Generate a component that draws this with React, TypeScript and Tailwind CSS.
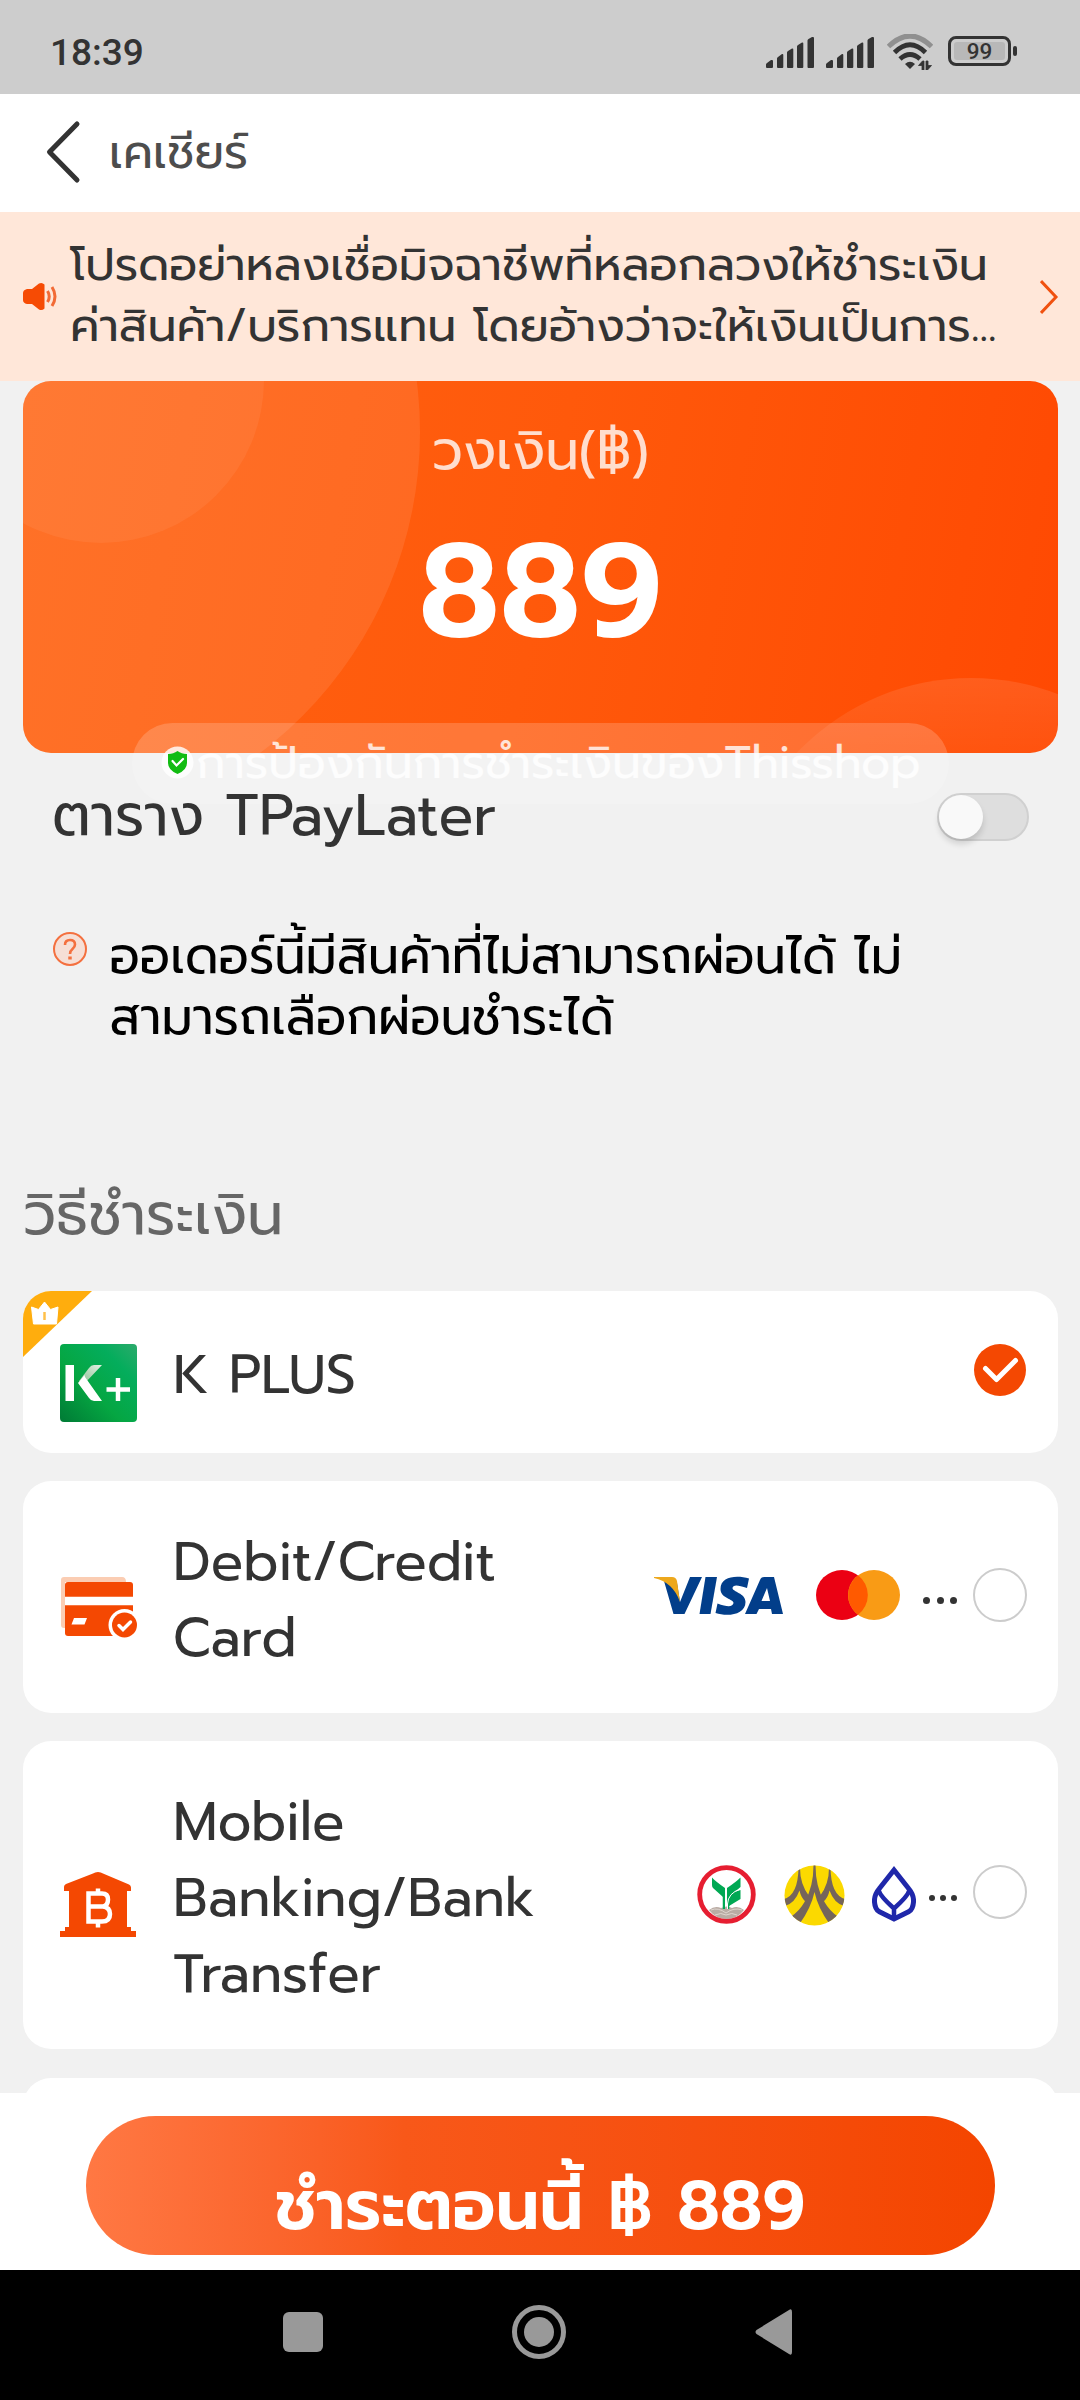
function Signal() {
  return (
    <svg width="48" height="31" viewBox="0 0 48 31" fill="#333">
      <path d="M0 27.500q0-1 1-1.500l4-3h1q1 0 1 1V30q0 1-1 1H1q-1 0-1-1zM11 21.500q0-1 1-1.500l4-3h.5q.8 0 .8 1V30q0 1-1 1H12q-1 0-1-1zM21 15.500q0-1 1-1.500l4-2.500h.5q.8 0 .8 1V30q0 1-1 1H22q-1 0-1-1zM31 9.500q0-1 1-1.500l4-2.500h.5q.8 0 .8 1V30q0 1-1 1H32q-1 0-1-1zM41.500 3.500q0-1 1-1.500l3.500-2h1q1 0 1 1V30q0 1-1 1h-4.500q-1 0-1-1z" />
    </svg>
  );
}

function StatusBar() {
  return (
    <header className="flex h-[94px] shrink-0 items-start bg-[#cdcdcd] pl-[50px] pr-[63px] text-[#333]">
      <div className="mt-[31px] font-[Roboto] text-[37px] font-medium leading-[44px]">18:39</div>
      <div className="ml-auto mt-[34px] flex items-start">
        <div className="mt-[2.500px] flex gap-3">
          <Signal />
          <Signal />
        </div>
        <svg className="ml-[13px]" width="46" height="36" viewBox="0 0 46 36" fill="none">
          <path d="M1.500 12.500Q23-8.500 44.500 12.500" stroke="#909090" strokeWidth="5" />
          <path d="M7.500 18.500Q23 3 38.500 18.500M13 25Q23 16 33 25" stroke="#333" strokeWidth="4.800" />
          <path d="M18 30q5-4.500 10 0l-5 5z" fill="#333" />
          <path d="M37 27v9h-2v-4.500h-3.500l4-4.500zM39 36v-9h2v4.500h3.500L40.500 36z" fill="#333" stroke="#333" strokeWidth=".8" />
        </svg>
        <div className="ml-[15px] mt-[2px] flex items-center gap-[2px]">
          <div className="flex h-[30px] w-[63px] rounded-[8px] border-3 border-[#333] p-[3px]">
            <div className="flex w-full items-center justify-center rounded-[3px] bg-[#b8b8b8] font-[Roboto] text-[22.500px] font-medium leading-none">
              99
            </div>
          </div>
          <div className="h-[10px] w-[4px] rounded-[2px] bg-[#333]" />
        </div>
      </div>
    </header>
  );
}

function Notice() {
  return (
    <section className="flex h-[169px] shrink-0 items-start bg-[#ffe7d9] pl-[23px] text-[#333]">
      <svg className="mt-[70px]" width="34" height="30" viewBox="0 0 34 30">
        <path d="M4 7h5l7-5.500q3-1.500 5.500 1v24q-2.500 2.500-5.500 1L9 22H4q-4-1-4-4v-7q0-3 4-4z" fill="#f64b04" />
        <path d="M24.500 9q3.500 5.500 0 11M29 5q6 9.500 0 19" fill="none" stroke="#f26a35" strokeWidth="3" />
      </svg>
      <div className="ml-[13px] mt-[22px] w-[926px] whitespace-nowrap text-[46px] leading-[61px]">
        <p>โปรดอย่าหลงเชื่อมิจฉาชีพที่หลอกลวงให้ชำระเงิน</p>
        <p className="text-[46.100px]">ค่าสินค้า/บริการแทน โดยอ้างว่าจะให้เงินเป็นการ...</p>
      </div>
      <svg className="ml-[44px] mt-[67px]" width="20" height="36" viewBox="0 0 20 36" fill="none" stroke="#f0510f" strokeWidth="3">
        <path d="M1 2l15 16L1 34" />
      </svg>
    </section>
  );
}

function BalanceCard() {
  return (
    <section className="relative ml-[23px] mr-[22px] h-[372px] shrink-0 whitespace-nowrap">
      <div className="relative flex h-full flex-col items-center overflow-hidden rounded-[28px] bg-linear-100 from-[#ff6312] via-[#ff590b] to-[#ff4902]">
        <div className="absolute -left-[407px] -top-[351px] size-[804px] rounded-full bg-white/9" />
        <div className="absolute -left-[85px] -top-[164px] size-[326px] rounded-full bg-white/6" />
        <div className="absolute left-[708px] top-[297px] size-[480px] rounded-full bg-linear-to-b from-white/10 to-white/0 to-30%" />
        <div className="relative mt-[36px] text-[53.600px] leading-[70px] text-white/80">วงเงิน(฿)</div>
        <div className="relative mt-[25px] text-[131px] font-semibold leading-[160px] text-white">889</div>
      </div>
      <div className="absolute left-[109px] top-[342px] flex h-[81px] w-[817px] items-start rounded-full bg-white/18 pl-[29px]">
        <svg className="mt-[23px]" width="33" height="33" viewBox="0 0 33 33">
          <circle cx="16.500" cy="16.500" r="16" fill="#fff" fillOpacity=".82" />
          <path d="M16.500 5q4 3 9.500 3v9q0 7-9.500 11Q7 24 7 17V8q5.500 0 9.500-3z" fill="#12bc12" />
          <path d="M11.500 15l4 4.500 6.500-6.500" fill="none" stroke="#fff" strokeWidth="2.200" strokeLinecap="round" />
        </svg>
        <div className="ml-[2px] mt-[10px] text-[46px] leading-[60px] text-white/80">การป้องกันการชำระเงินของThisshop</div>
      </div>
    </section>
  );
}

function Installments() {
  return (
    <section className="relative h-[424px] shrink-0 whitespace-nowrap pl-[52px] pr-[51px]">
      <div className="flex items-start justify-between pt-[25px]">
        <div className="text-[57.500px] leading-[76px] text-[#333]">ตาราง TPayLater</div>
        <div className="mt-[15px] h-[48px] w-[92px] rounded-full border-2 border-[#d0d0d0] bg-[#dedede]">
          <div className="size-[44px] rounded-full bg-[#f9f9f9] shadow-[0_5px_6px_rgba(0,0,0,0.14)]" />
        </div>
      </div>
      <div className="mt-[72px] flex items-start">
        <svg className="mt-[5px]" width="36" height="36" viewBox="0 0 36 36" fill="none" stroke="#f4703f">
          <circle cx="18" cy="18" r="16" fill="#f6dfd6" strokeWidth="2" />
          <path d="M13 14q0-5 5-5t5 4.500q0 2.500-2.500 4.500T18 23" strokeWidth="2.600" />
          <path d="M18 25.500v3" strokeWidth="3.500" />
        </svg>
        <div className="ml-[21.500px] text-[49.800px] leading-[61px] text-black">
          <p>ออเดอร์นี้มีสินค้าที่ไม่สามารถผ่อนได้ ไม่</p>
          <p>สามารถเลือกผ่อนชำระได้</p>
        </div>
      </div>
    </section>
  );
}

function Radio({ className }: { className: string }) {
  return <div className={`size-[54px] shrink-0 rounded-full border-2 border-[#ccc] ${className}`} />;
}

function Ellipsis({ className, dot }: { className: string; dot: string }) {
  return (
    <div className={`flex ${className}`}>
      {[0, 1, 2].map((i) => (
        <div key={i} className={`rounded-full bg-[#333] ${dot}`} />
      ))}
    </div>
  );
}

function KPlusLogo() {
  return (
    <svg className="ml-[37px] mt-[53px]" width="77" height="78" viewBox="0 0 77 78">
      <defs>
        <linearGradient id="kplus" x1="0" y1="1" x2="1" y2="0">
          <stop offset="0" stopColor="#007a35" />
          <stop offset=".4" stopColor="#05a642" />
          <stop offset=".75" stopColor="#04ad5c" />
          <stop offset="1" stopColor="#2caa6c" />
        </linearGradient>
        <linearGradient id="karm" x1="1" y1="0" x2="0" y2="1">
          <stop offset="0" stopColor="#e4f1e4" />
          <stop offset="1" stopColor="#86bd8e" />
        </linearGradient>
      </defs>
      <rect width="77" height="78" rx="4" fill="url(#kplus)" />
      <path d="M5.500 21H14v36H5.500z" fill="#fff" />
      <path d="M42 21h-8q-3 0-5 3L19 37l6 2z" fill="url(#karm)" />
      <path d="M24.500 31l-6.500 8 11 15q2 3 5 3h8L25 33z" fill="#fff" />
      <path d="M46.500 45.500H70M58 34v23" stroke="#fff" strokeWidth="4.500" />
    </svg>
  );
}

function KPlusCard() {
  return (
    <div className="relative flex h-[162px] shrink-0 items-start overflow-hidden rounded-[28px] bg-white">
      <svg className="absolute left-0 top-0" width="69" height="66" viewBox="0 0 69 66">
        <path d="M0 0h69L0 66z" fill="#ffad0d" />
        <path d="M8.500 16l7 2.500L21.500 11l6 7.500 7.500-2.500-1.500 17H10.500z" fill="#fff" stroke="#fff" strokeLinejoin="round" />
        <path d="M21.500 21v8" stroke="#ffc04a" strokeWidth="2.500" />
      </svg>
      <KPlusLogo />
      <div className="ml-[36px] mt-[47px] text-[53.600px] leading-[76px]">K PLUS</div>
      <svg className="ml-auto mr-[31px] mt-[52px]" width="54" height="54" viewBox="0 0 54 54">
        <circle cx="27" cy="27" r="26" fill="#f44802" />
        <path d="M12.500 25.500L23.500 36.500l19-19" fill="none" stroke="#fff" strokeWidth="5" strokeLinecap="round" strokeLinejoin="round" />
      </svg>
    </div>
  );
}

function CreditCardRow() {
  return (
    <div className="flex h-[232px] shrink-0 items-start rounded-[28px] bg-white">
      <svg className="ml-[37px] mt-[96px]" width="78" height="61" viewBox="0 0 78 61">
        <path d="M4 0h58q4 0 4 5H5v46H4q-3 0-3-3V3q0-3 3-3z" fill="#fbcdb3" />
        <rect x="5" y="5" width="68" height="54" rx="3" fill="#f44802" />
        <path d="M5 19.700h68v8.600H5z" fill="#fff" />
        <path d="M14 41h13l-2.500 6.500H11.500z" fill="#fff" />
        <circle cx="64.500" cy="48" r="16" fill="#fff" />
        <circle cx="64.500" cy="48" r="12.500" fill="#f44802" />
        <path d="M59 48.500l4 4 7.500-7.500" fill="none" stroke="#fff" strokeWidth="3.500" strokeLinecap="round" />
      </svg>
      <div className="ml-[35px] mt-[44px] text-[53.600px] leading-[76px]">
        <p>Debit/Credit</p>
        <p>Card</p>
      </div>
      <div className="ml-auto mr-[31px] flex items-start">
        <svg className="mt-[94px]" width="132" height="42" viewBox="0 0 132 42">
          <g fill="#023e8a">
            <path d="M12 6l9.500 33h11L50 2H38L28 27 25 8z" />
            <path d="M53.500 2H65l-6.500 37H47.500z" />
            <path d="M97 3.500l-2 9.500q-14-5-14.500 0c0 4 13 5 13 14 0 13-18 15-30 11l2-9.500q15 5.500 16-.5c.5-4-13-4.500-13-14C68.500 1 85 0 97 3.500z" />
            <path fillRule="evenodd" d="M105.500 2H122l9 37h-11l-1-5h-12l-2.500 5H93L108 5q1-3 4-3h-2zM115 13l-5.500 13h8.500z" />
          </g>
          <path d="M2 2h18q4 0 5 4l3 21Q21 7 2 3z" fill="#eda81d" />
        </svg>
        <svg className="ml-[32px] mt-[89px]" width="84" height="50" viewBox="0 0 84 50">
          <ellipse cx="26" cy="25" rx="26" ry="25" fill="#eb0013" />
          <ellipse cx="58" cy="25" rx="26" ry="25" fill="#f99b15" />
          <path d="M42 5.300a25.600 25 0 0 1 0 39.400 25.600 25 0 0 1 0-39.400z" fill="#ff5a00" />
        </svg>
        <Ellipsis className="ml-[23px] mt-[116px] gap-[6.500px]" dot="size-[7px]" />
        <Radio className="ml-[16px] mt-[87px]" />
      </div>
    </div>
  );
}

function KasikornLogo() {
  return (
    <svg className="mt-[124px]" width="59" height="59" viewBox="0 0 59 59">
      <circle cx="29.500" cy="29.500" r="26.800" fill="#fff" />
      <path d="M12 45q6-5 12-2 6-3 11 0 6-3 12 2-7 9-17.500 9T12 45z" fill="#b9aca4" />
      <path d="M14 45q7-3 15 3 8-6 16-3M18 50q6-3 11 0 6-3 11 0" fill="none" stroke="#ded5cf" strokeWidth="1" />
      <path d="M15 12.500Q18 16 28 23v21h-2V32L16 23q-1-1-1-3zM43.500 12.500V22L32 32q3-5 11.500-7v9L32 41v3h-2V23q9-6 13.500-10.500z" fill="#00a853" />
      <path d="M26.500 30v14M31.500 38v6" fill="none" stroke="#00a853" strokeWidth="1.500" />
      <path d="M43.500 24Q31 28 30.500 39v5" fill="none" stroke="#fff" strokeWidth="1" />
      <circle cx="29.500" cy="29.500" r="26.800" fill="none" stroke="#e61e31" strokeWidth="4.800" />
    </svg>
  );
}

function KrungsriLogo() {
  return (
    <svg className="ml-[28px] mt-[124px]" width="61" height="61" viewBox="0 0 61 61">
      <defs>
        <clipPath id="disc">
          <circle cx="30.500" cy="30.500" r="30" />
        </clipPath>
      </defs>
      <g clipPath="url(#disc)">
        <path d="M0 0h61v61H0z" fill="#fbd900" />
        <g fill="#75655b">
          <path d="M29.500 0h2q0 22 9 37 5 9 14 15l-9 7Q34 43 30.500 27 27 43 15.500 59l-9-7q9-6 14-15 9-15 9-37z" />
          <path d="M14.500 3h1.500q0 16 9 28l-3 6q-5-4-6.500-11.500Q11 38 1 41l-1-7q14-4 14.500-31zM46.500 3H45q0 16-9 28l3 6q5-4 6.500-11.500Q50 38 60 41l1-7Q47 30 46.500 3z" />
        </g>
      </g>
    </svg>
  );
}

function BangkokLogo() {
  return (
    <svg className="ml-[27px] mt-[124px]" width="44" height="57" viewBox="0 0 44 57" fill="none" stroke="#1f27aa" strokeWidth="5">
      <path d="M22 5L7 24Q2 30 2.500 37T7 46.500L22 54l15-7.500q4-2.500 4.500-9.500T37 24z" />
      <path d="M6.500 25Q8 31 22 43.500 36 31 37.500 25M22 54V42" strokeWidth="4.500" />
    </svg>
  );
}

function BankTransferRow() {
  return (
    <div className="flex h-[308px] shrink-0 items-start rounded-[28px] bg-white">
      <svg className="ml-[37px] mt-[131px]" width="76" height="65" viewBox="0 0 76 65">
        <path d="M38 0q3 0 5 1.500l26 11q2 1 2 3V19h-4v36h4v4h5v6H0v-6h5v-4h4V19H4v-4q0-2 2-3l27-10.500Q35 0 38 0z" fill="#f44802" />
        <path d="M28.500 21.500H42q6 0 6 6t-5 7q7 1 7 7.500 0 7.500-8 7.500H28.500zM29 34.500h14M38 16.500v5M38 49.500v6" fill="none" stroke="#fff" strokeWidth="4.500" />
      </svg>
      <div className="ml-[37px] mt-[44px] text-[53.600px] leading-[76px]">
        <p>Mobile</p>
        <p>Banking/Bank</p>
        <p>Transfer</p>
      </div>
      <div className="ml-auto mr-[31px] flex items-start">
        <KasikornLogo />
        <KrungsriLogo />
        <BangkokLogo />
        <Ellipsis className="ml-[13px] mt-[154px] gap-[5px]" dot="size-[6px]" />
        <Radio className="ml-[16px] mt-[124px]" />
      </div>
    </div>
  );
}

function Footer() {
  return (
    <footer className="h-[177px] shrink-0 bg-white pt-[23px]">
      <button className="mx-auto flex h-[139px] w-[909px] items-start justify-center whitespace-nowrap rounded-full bg-linear-to-r from-[#ff7843] via-[#f85819] via-35% to-[#f44500] pt-[45px] text-[69px] font-semibold leading-[90px] text-white">
        ชำระตอนนี้ ฿ 889
      </button>
    </footer>
  );
}

function NavBar() {
  return (
    <nav className="flex h-[130px] shrink-0 items-start bg-black pl-[283px]">
      <div className="mt-[42px] size-[40px] rounded-[6px] bg-[#999]" />
      <div className="ml-[189px] mt-[35px] flex size-[54px] items-center justify-center rounded-full border-[5px] border-[#999]">
        <div className="size-[30px] rounded-full bg-[#999]" />
      </div>
      <svg className="ml-[189px] mt-[39px]" width="37" height="46" viewBox="0 0 37 46" fill="#999">
        <path d="M34 1q3-2 3 2v40q0 4-3 2L1.500 25q-2-2 0-4z" />
      </svg>
    </nav>
  );
}

export default function App() {
  return (
    <div className="flex h-[2400px] w-[1080px] flex-col overflow-hidden bg-[#f1f1f1] font-['Prompt','Noto_Sans','Noto_Sans_Thai',sans-serif]">
      <StatusBar />
      <div className="flex h-[118px] shrink-0 items-start bg-white pl-[45px]">
        <svg className="mt-[26px]" width="36" height="64" viewBox="0 0 36 64" fill="none" stroke="#333" strokeWidth="5" strokeLinecap="round" strokeLinejoin="round">
          <path d="M32 4L4.500 32 32 60" />
        </svg>
        <div className="ml-[28px] mt-[29px] text-[47px] leading-[60px] text-[#4d4d4d]">เคเชียร์</div>
      </div>
      <main className="flex h-[1881px] shrink-0 flex-col overflow-hidden">
        <Notice />
        <BalanceCard />
        <Installments />
        <h2 className="ml-[23px] h-[114px] shrink-0 text-[57.500px] leading-[76px] text-[#666]">วิธีชำระเงิน</h2>
        <div className="ml-[23px] mr-[22px] flex flex-col gap-[28px] text-[#333]">
          <KPlusCard />
          <CreditCardRow />
          <BankTransferRow />
          <div className="mt-px h-[162px] shrink-0 rounded-[28px] bg-white" />
        </div>
      </main>
      <Footer />
      <NavBar />
    </div>
  );
}
